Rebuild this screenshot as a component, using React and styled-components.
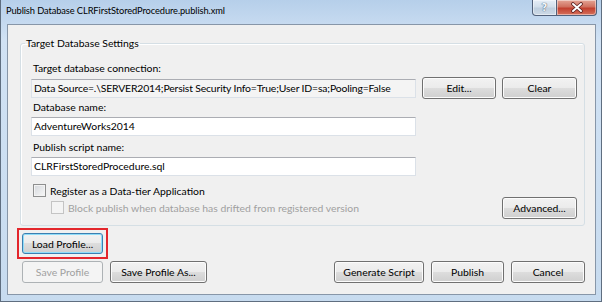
import React from 'react';
import styled, { createGlobalStyle } from 'styled-components';

const GlobalStyle = createGlobalStyle`
  * { box-sizing: border-box; }
  html, body { margin: 0; padding: 0; background: #fff; }
  body {
    font-family: "Segoe UI", Lato, "Liberation Sans", sans-serif;
    font-size: 10.4px;
    color: #000;
  }
`;

const Window = styled.div`
  width: 602px;
  height: 302px;
  display: flex;
  flex-direction: column;
  border: 1px solid #5f6e80;
  border-top: none;
  background: linear-gradient(#b6cfea, #d1e2f4 40px, #c7dbef);
`;

const TitleBar = styled.div`
  height: 24px;
  display: flex;
  align-items: flex-start;
  padding: 0 4px 0 5px;
  flex-shrink: 0;
`;

const Title = styled.div`
  padding-top: 3px;
  line-height: 16px;
  font-size: 9.3px;
  letter-spacing: -0.1px;
  color: #000;
`;

const Captions = styled.div`
  margin-left: auto;
  display: flex;
`;

const CaptionButton = styled.div`
  height: 16px;
  width: ${(p) => (p.$close ? 40 : 25)}px;
  display: flex;
  align-items: center;
  justify-content: center;
  border: 1px solid #52617a;
  border-top: none;
  border-left: ${(p) => (p.$close ? 'none' : '1px solid #52617a')};
  border-radius: ${(p) => (p.$close ? '0 0 4px 0' : '0 0 0 4px')};
  background: ${(p) =>
    p.$close
      ? 'linear-gradient(#e4a596, #d0705f 45%, #c2402f 55%, #d5715c)'
      : 'linear-gradient(#e6eef7, #d3dfeb 45%, #bfcfdf 55%, #cdd9e6)'};
  box-shadow: inset 0 0 0 1px rgba(255, 255, 255, 0.45);
`;

const HelpGlyph = styled.span`
  font-family: "DejaVu Sans", sans-serif;
  font-weight: bold;
  font-size: 10px;
  line-height: 10px;
  color: #f4f7fb;
  text-shadow: 0 0 1px #4a5a70, 0 0 1px #4a5a70;
`;

const Client = styled.div`
  flex: 1;
  margin: 0 5px 6px 6px;
  border: 1px solid #8796a8;
  background: #f0f0f0;
  padding: 0 10px 0 12px;
  display: flex;
  flex-direction: column;
`;

const GroupBox = styled.fieldset`
  margin: 10px 0 0 0;
  padding: 9px 7px 6px 10px;
  border: 1px solid #d5dfe5;
  border-radius: 3px;
  box-shadow: inset 1px 1px 0 #fff;
  min-width: 0;
`;

const Legend = styled.legend`
  padding: 0 1px;
  margin-left: -6px;
  line-height: 16px;
`;

const Label = styled.div`
  line-height: ${(p) => p.$h || 16}px;
  padding-left: 2px;
  margin-top: ${(p) => p.$mt || 0}px;
`;

const Row = styled.div`
  display: flex;
  align-items: center;
  gap: 6px;
  height: 22px;
`;

const TextBox = styled.div`
  width: 385px;
  height: 19px;
  margin-top: ${(p) => p.$mt || 0}px;
  padding-left: 2px;
  line-height: 17px;
  white-space: nowrap;
  overflow: hidden;
  border: 1px solid #dbe1e8;
  border-top-color: #abadb3;
  background: ${(p) => (p.$readOnly ? '#f4f4f4' : '#fff')};
  letter-spacing: ${(p) => (p.$readOnly ? '-0.15px' : 'normal')};
`;

const Button = styled.div`
  width: ${(p) => p.$w}px;
  height: ${(p) => p.$h || 22}px;
  display: flex;
  align-items: center;
  justify-content: center;
  border: 1px solid #707070;
  border-radius: 3px;
  background: linear-gradient(#f2f2f2, #ebebeb 50%, #dddddd 50%, #cfcfcf);
  box-shadow: inset 0 0 0 1px #fcfcfc;
  color: #000;
  flex-shrink: 0;

  &[data-default='true'] {
    border-color: #3c7fb1;
    box-shadow: inset 0 0 0 1px #8fdcf8;
  }

  &[aria-disabled='true'] {
    border-color: #adb2b5;
    background: #f4f4f4;
    box-shadow: none;
    color: #a0a0a0;
  }
`;

const CheckSection = styled.div`
  display: flex;
  align-items: flex-end;
  justify-content: space-between;
  margin-top: 6px;
`;

const CheckColumn = styled.div`
  display: flex;
  flex-direction: column;
  padding-bottom: 3px;
`;

const CheckRow = styled.label`
  display: flex;
  align-items: center;
  height: 17px;
  padding-left: ${(p) => (p.$indent ? 20 : 2)}px;
  color: ${(p) => (p.$disabled ? '#a0a0a0' : '#000')};
`;

const CheckBox = styled.span`
  width: 13px;
  height: 13px;
  margin-right: 4px;
  border: 1px solid ${(p) => (p.$disabled ? '#c4c4c4' : '#8e8f8f')};
  background: ${(p) =>
    p.$disabled ? '#f4f4f4' : 'linear-gradient(135deg, #d4d7dc, #f8f8f8)'};
  box-shadow: inset 0 0 0 1px ${(p) => (p.$disabled ? '#f4f4f4' : '#f3f3f3')};
`;

const Highlight = styled.div`
  align-self: flex-start;
  margin: 2px 0 0 -3px;
  padding: 3px;
  border: 2px solid #e3262c;
  display: flex;
`;

const ButtonBar = styled.div`
  display: flex;
  gap: 7px;
  margin: 2px 0 0 2px;
`;

const Spacer = styled.div`
  flex: 1;
`;

const CloseIcon = () => (
  <svg width="14" height="11" viewBox="0 0 14 11">
    <path
      d="M3 2 L11 9 M11 2 L3 9"
      stroke="#5a2020"
      strokeWidth="3.6"
      strokeLinecap="round"
    />
    <path
      d="M3 2 L11 9 M11 2 L3 9"
      stroke="#fff"
      strokeWidth="2"
      strokeLinecap="round"
    />
  </svg>
);

const App = () => (
  <>
    <GlobalStyle />
    <Window>
      <TitleBar>
        <Title>Publish Database CLRFirstStoredProcedure.publish.xml</Title>
        <Captions>
          <CaptionButton>
            <HelpGlyph>?</HelpGlyph>
          </CaptionButton>
          <CaptionButton $close>
            <CloseIcon />
          </CaptionButton>
        </Captions>
      </TitleBar>
      <Client>
        <GroupBox>
          <Legend>Target Database Settings</Legend>
          <Label $h={17}>Target database connection:</Label>
          <Row>
            <TextBox $readOnly>
              Data Source=.\SERVER2014;Persist Security Info=True;User ID=sa;Pooling=False
            </TextBox>
            <Button $w={74}>Edit...</Button>
            <Button $w={75}>Clear</Button>
          </Row>
          <Label>Database name:</Label>
          <TextBox $mt={2}>AdventureWorks2014</TextBox>
          <Label $mt={3}>Publish script name:</Label>
          <TextBox $mt={2}>CLRFirstStoredProcedure.sql</TextBox>
          <CheckSection>
            <CheckColumn>
              <CheckRow>
                <CheckBox />
                Register as a Data-tier Application
              </CheckRow>
              <CheckRow $indent $disabled>
                <CheckBox $disabled />
                Block publish when database has drifted from registered version
              </CheckRow>
            </CheckColumn>
            <Button $w={75}>Advanced...</Button>
          </CheckSection>
        </GroupBox>
        <Highlight>
          <Button $w={81} $h={21} data-default="true">
            Load Profile...
          </Button>
        </Highlight>
        <ButtonBar>
          <Button $w={81} aria-disabled="true">
            Save Profile
          </Button>
          <Button $w={97}>Save Profile As...</Button>
          <Spacer />
          <Button $w={90}>Generate Script</Button>
          <Button $w={73}>Publish</Button>
          <Button $w={74}>Cancel</Button>
        </ButtonBar>
      </Client>
    </Window>
  </>
);

export default App;
